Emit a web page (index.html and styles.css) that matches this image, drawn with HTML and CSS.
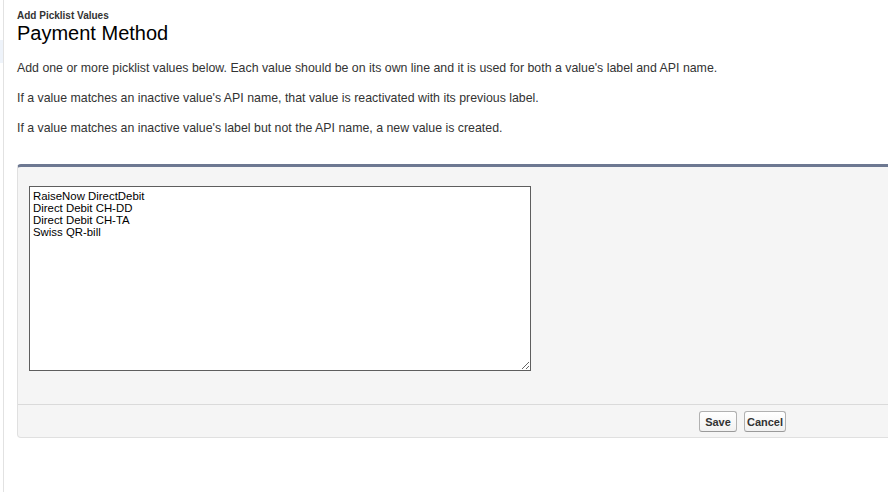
FILE: index.html
```html
<!DOCTYPE html>
<html lang="en">
<head>
<meta charset="utf-8">
<title>Add Picklist Values</title>
<link rel="stylesheet" href="styles.css">
</head>
<body>
<div class="shell">
  <div class="rail"><div class="rail-mark"></div></div>
  <main class="content">
    <div class="page-type">Add Picklist Values</div>
    <h1 class="page-title">Payment Method</h1>
    <p class="note first">Add one or more picklist values below. Each value should be on its own line and it is used for both a value's label and API name.</p>
    <p class="note">If a value matches an inactive value's API name, that value is reactivated with its previous label.</p>
    <p class="note">If a value matches an inactive value's label but not the API name, a new value is created.</p>
    <section class="block">
      <div class="block-body">
        <textarea class="values">RaiseNow DirectDebit
Direct Debit CH-DD
Direct Debit CH-TA
Swiss QR-bill</textarea>
      </div>
      <div class="block-buttons">
        <button class="btn btn-save" type="button">Save</button>
        <button class="btn btn-cancel" type="button">Cancel</button>
      </div>
    </section>
  </main>
</div>
</body>
</html>
```
FILE: styles.css
```css
html, body {
  margin: 0;
  padding: 0;
  background: #ffffff;
}
body {
  font-family: "Liberation Sans", Arial, Helvetica, sans-serif;
  color: #333333;
}
.shell {
  display: flex;
  height: 492px;
  width: 888px;
}
.rail {
  width: 3px;
  flex: none;
  padding-top: 40px;
}
.rail-mark {
  height: 23px;
  background: #eef3fa;
}
.content {
  flex: 1;
  min-width: 0;
  border-left: 1px solid #e2e2e2;
  padding: 10px 0 0 13px;
  overflow: hidden;
}
.page-type {
  font-size: 10px;
  line-height: 12px;
  font-weight: bold;
  color: #333333;
}
.page-title {
  margin: 0;
  font-size: 20px;
  line-height: 22px;
  font-weight: normal;
  color: #000000;
}
.note {
  margin: 0 0 15px;
  font-size: 12.35px;
  line-height: 15px;
  color: #333333;
  white-space: nowrap;
}
.note.first {
  margin-top: 17px;
}
.block {
  margin-top: 28px;
  margin-right: -12px;
  background: #f5f5f5;
  border: 1px solid #e0e0e0;
  border-top: 3px solid #6d7891;
  border-radius: 4px;
}
.block-body {
  padding: 19px 11px 33px;
}
.values {
  display: block;
  box-sizing: border-box;
  width: 502px;
  height: 185px;
  margin: 0;
  padding: 3px 3px 2px;
  border: 1px solid #5e5e5e;
  border-radius: 0;
  background: #ffffff;
  font-family: "Liberation Sans", Arial, Helvetica, sans-serif;
  font-size: 11.4px;
  line-height: 12px;
  color: #000000;
  resize: both;
}
.block-buttons {
  display: flex;
  gap: 7px;
  height: 33px;
  box-sizing: border-box;
  padding: 6px 0 0 681px;
  border-top: 1px solid #dadada;
}
.btn {
  box-sizing: border-box;
  height: 21px;
  padding: 0;
  border: 1px solid #b1b1b1;
  border-bottom-color: #9a9a9a;
  border-radius: 3px;
  background: linear-gradient(#ffffff, #f1f1f1);
  font-family: "Liberation Sans", Arial, Helvetica, sans-serif;
  font-size: 11px;
  font-weight: bold;
  color: #333333;
  text-align: center;
}
.btn-save {
  width: 38px;
}
.btn-cancel {
  width: 42px;
}
```
